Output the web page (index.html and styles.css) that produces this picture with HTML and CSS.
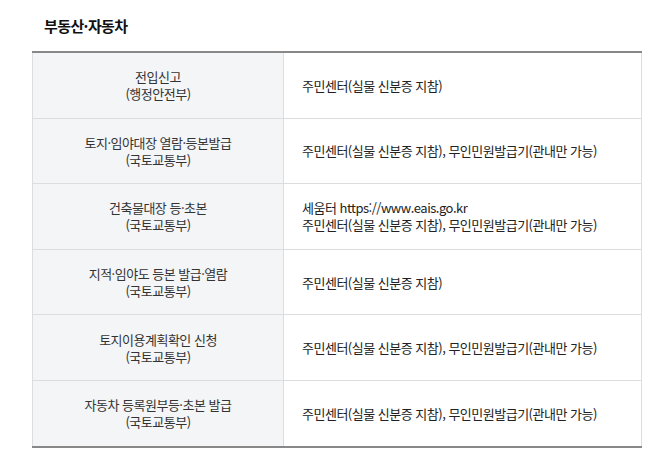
FILE: index.html
```html
<!DOCTYPE html>
<html lang="ko">
<head>
<meta charset="utf-8">
<link rel="stylesheet" href="styles.css">
</head>
<body>
<div class="wrap">
  <h3 class="title">부동산·자동차</h3>
  <table class="tbl">
    <tbody>
      <tr><th>전입신고<br>(행정안전부)</th><td>주민센터(실물 신분증 지참)</td></tr>
      <tr><th>토지·임야대장 열람·등본발급<br>(국토교통부)</th><td>주민센터(실물 신분증 지참), 무인민원발급기(관내만 가능)</td></tr>
      <tr><th>건축물대장 등·초본<br>(국토교통부)</th><td>세움터 https://www.eais.go.kr<br>주민센터(실물 신분증 지참), 무인민원발급기(관내만 가능)</td></tr>
      <tr><th>지적·임야도 등본 발급·열람<br>(국토교통부)</th><td>주민센터(실물 신분증 지참)</td></tr>
      <tr><th>토지이용계획확인 신청<br>(국토교통부)</th><td>주민센터(실물 신분증 지참), 무인민원발급기(관내만 가능)</td></tr>
      <tr><th>자동차 등록원부등·초본 발급<br>(국토교통부)</th><td>주민센터(실물 신분증 지참), 무인민원발급기(관내만 가능)</td></tr>
    </tbody>
  </table>
</div>
</body>
</html>
```
FILE: styles.css
```css
html, body { margin: 0; padding: 0; background: #fff; }
body { font-family: "Noto Sans CJK KR", "Noto Sans", sans-serif; color: #222; }
.wrap { padding: 14px 29px 0 32px; }
.title { margin: 0 0 13px 12px; font-size: 15px; font-weight: 700; line-height: 24px; color: #111; letter-spacing: -0.6px; }
.tbl { width: 610px; border-collapse: collapse; border-top: 2px solid #888; border-bottom: 2px solid #888; }
.tbl th, .tbl td { height: 64.6px; padding: 0 18px; border: 1px solid #ddd; font-size: 13px; line-height: 17px; font-weight: 400; vertical-align: middle; letter-spacing: -0.5px; }
.tbl tr:first-child th, .tbl tr:first-child td { border-top: 0; }
.tbl tr:last-child th, .tbl tr:last-child td { border-bottom: 0; }
.tbl th { width: 214px; background: #f4f5f7; text-align: center; color: #333; }
.tbl td { text-align: left; color: #222; }
```
